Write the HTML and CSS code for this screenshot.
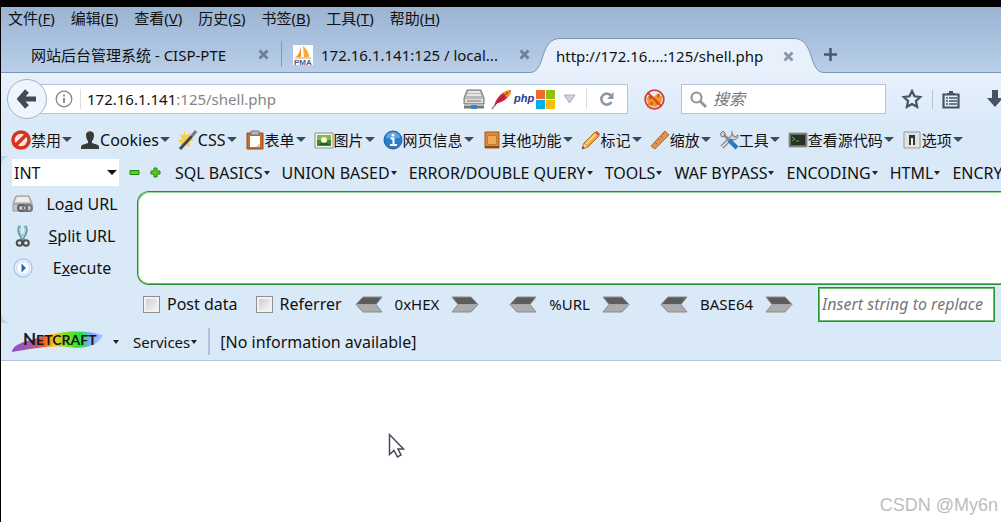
FILE: index.html
```
<!DOCTYPE html>
<html lang="zh-CN">
<head>
  <meta charset="UTF-8" />
  <meta name="viewport" content="width=device-width, initial-scale=1.0" />
  <title>http://172.16.1.141:125/shell.php</title>
  <link rel="stylesheet" href="styles.css">
</head>
<body>
  <header class="window-top">
    <nav class="menubar">
      <button>文件(<u>F</u>)</button>
      <button>编辑(<u>E</u>)</button>
      <button>查看(<u>V</u>)</button>
      <button>历史(<u>S</u>)</button>
      <button>书签(<u>B</u>)</button>
      <button>工具(<u>T</u>)</button>
      <button>帮助(<u>H</u>)</button>
    </nav>

    <div class="tabs">
      <div class="tab tab-first">
        <span class="tab-title">网站后台管理系统 - CISP-PTE</span>
        <button class="close" aria-label="Close tab"><svg width="11" height="11" viewBox="0 0 11 11"><path d="M1.500 1.500l8 8M9.500 1.500l-8 8" stroke="#6f7f95" stroke-width="2.800"/></svg></button>
      </div>
      <div class="tab tab-pma">
        <svg width="20" height="20" viewBox="0 0 20 20"><path d="M0 0h20v20H0z" fill="#fff"/><path d="M8 1v11H3c3-3 4-6 5-11z" fill="#f7931e"/><path d="M10 1c4 3 6 7 6 11h-5z" fill="#f9a93c"/><path d="M2 13h16" stroke="#c9a26b"/><text x="1" y="20" class="pma-text">PMA</text></svg>
        <span class="tab-title">172.16.1.141:125 / local...</span>
        <button class="close" aria-label="Close tab"><svg width="11" height="11" viewBox="0 0 11 11"><path d="M1.500 1.500l8 8M9.500 1.500l-8 8" stroke="#6f7f95" stroke-width="2.800"/></svg></button>
      </div>
      <div class="tab-active">
        <svg width="30" height="35" viewBox="0 0 30 35"><path d="M0 34.5C16 34.5 9 .5 30 .5V35H0z" fill="#e8f1fb"/><path d="M0 34.5C16 34.5 9 .5 30 .5" fill="none" stroke="#7d95b5"/></svg>
        <div class="tab-body">
          <span class="tab-title">http://172.16....:125/shell.php</span>
          <button class="close" aria-label="Close tab"><svg width="11" height="11" viewBox="0 0 11 11"><path d="M1.500 1.500l8 8M9.500 1.500l-8 8" stroke="#8795a8" stroke-width="2.800"/></svg></button>
        </div>
        <svg width="30" height="35" viewBox="0 0 30 35"><path d="M30 34.5C14 34.5 21 .5 0 .5V35H30z" fill="#e8f1fb"/><path d="M30 34.5C14 34.5 21 .5 0 .5" fill="none" stroke="#7d95b5"/></svg>
      </div>
      <button class="new-tab" aria-label="New tab"><svg width="13" height="13" viewBox="0 0 13 13"><path d="M6.500 0v13M0 6.500h13" stroke="#4a586b" stroke-width="2.500"/></svg></button>
    </div>
  </header>

  <div class="navbar">
    <button class="back" aria-label="Back"><svg width="18" height="20" viewBox="0 0 18 20"><path d="M9 2L2 10l7 8M3 10h15" fill="none" stroke="#414b58" stroke-width="5"/></svg></button>
    <div class="urlbar">
      <svg width="18" height="18" viewBox="0 0 18 18"><circle cx="9" cy="9" r="7.800" fill="none" stroke="#868686" stroke-width="1.300"/><path d="M9 8v5M9 4.500v2" stroke="#868686" stroke-width="1.800"/></svg>
      <a class="address" href="#"><b>172.16.1.141</b>:125/shell.php</a>
      <div class="server-icons">
        <svg width="22" height="21" viewBox="0 0 22 21"><path d="M4 1h14l3 8v6H1V9z" fill="#b9b9b9" stroke="#777"/><path d="M5 3h12M4 6h14" stroke="#e6e6e6" stroke-width="2"/><path d="M2 10h18v4H2z" fill="#dedede"/><path d="M4 12h14" stroke="#777"/><path d="M1 18h20" stroke="#777" stroke-width="3"/><path d="M8 16h6v4H8z" fill="#3a7fd6"/></svg>
        <svg width="21" height="21" viewBox="0 0 21 21"><path d="M1 20L5 15" stroke="#a87bb0" stroke-width="1.500"/><path d="M3 17C5 9 11 2 20 1c0 5-5 12-16 14z" fill="#cf2344"/><path d="M12 4c2-2 5-3 8-3 0 3-2 6-4 8z" fill="#f08a24"/><path d="M4 16L17 3" stroke="#7d1d5c"/></svg>
        <svg width="22" height="20" viewBox="0 0 22 20"><text x="1" y="13" class="php-text">php</text></svg>
        <svg width="19" height="19" viewBox="0 0 19 19"><path d="M0 0h9v9H0z" fill="#f5682c"/><path d="M10 0h9v9h-9z" fill="#8cc30b"/><path d="M0 10h9v9H0z" fill="#00adef"/><path d="M10 10h9v9h-9z" fill="#fdbb0b"/></svg>
      </div>
      <button class="drop" aria-label="Show history"><svg width="13" height="10" viewBox="0 0 13 10"><path d="M1 1h11L6.500 9z" fill="#ccd2da" stroke="#a5afbb"/></svg></button>
      <button class="reload" aria-label="Reload"><svg width="16" height="16" viewBox="0 0 16 16"><path d="M12 4.500A5.500 5.500 0 1 0 12.500 11" fill="none" stroke="#8b98a7" stroke-width="2.600"/><path d="M14.500 1v7H8z" fill="#8b98a7"/></svg></button>
    </div>
    <button class="firebug" aria-label="Blocked"><svg width="21" height="21" viewBox="0 0 21 21"><path d="M3 9l4-3 3 2 4-4 4 4-1 6-5 4-8-2z" fill="#ec9622"/><path d="M5 7l2 3M15 5l-1 3M7 16l1-3M14 15l-2-3" stroke="#b5650b" stroke-width="2"/><circle cx="10.500" cy="10.500" r="9.300" fill="none" stroke="#dc3a32" stroke-width="1.800"/><path d="M4 4l13 13" stroke="#dc3a32" stroke-width="1.800"/></svg></button>
    <label class="search">
      <svg width="17" height="17" viewBox="0 0 17 17"><circle cx="6.500" cy="6.500" r="5" fill="none" stroke="#959595" stroke-width="2.200"/><path d="M10 10l6 6" stroke="#959595" stroke-width="2.800"/></svg>
      <input type="text" placeholder="搜索" aria-label="搜索">
    </label>
    <div class="nav-actions">
      <button aria-label="Bookmark"><svg width="20" height="20" viewBox="0 0 20 20"><path d="M10 2l2.500 5.300 5.700.7-4.200 4 1.100 5.800L10 15l-5.100 2.800L6 12 1.800 8l5.700-.7z" fill="none" stroke="#465362" stroke-width="2.200"/></svg></button>
      <button class="library" aria-label="Library"><svg width="18" height="19" viewBox="0 0 18 19"><path d="M1.500 4.500h15v13h-15z" fill="none" stroke="#465362" stroke-width="2.200"/><path d="M5 5V3h2V1h4v2h2v2z" fill="#465362"/><path d="M4 8h2M7 8h8M4 11h2M7 11h8M4 14h2M7 14h8" stroke="#465362" stroke-width="1.600"/></svg></button>
      <button class="download" aria-label="Downloads"><svg width="16" height="18" viewBox="0 0 16 18"><path d="M5 0h6v8h5l-8 9-8-9h5z" fill="#465362"/></svg></button>
    </div>
  </div>

  <div class="devbar">
    <button><svg width="20" height="20" viewBox="0 0 20 20"><circle cx="10" cy="10" r="8" fill="#f5e8e4" stroke="#d5351e" stroke-width="3.600"/><path d="M4.500 15.500l11-11" stroke="#d5351e" stroke-width="3.600"/></svg>禁用<i class="arrow"></i></button>
    <button class="latin"><svg width="20" height="20" viewBox="0 0 20 20"><path d="M6 5c0-5 8-5 8 0 0 3-1 5-2 6v2l6 2c1 .5 1 2 1 4H1c0-2 0-3.500 1-4l6-2v-2C7 10 6 8 6 5z" fill="#3a3a3a"/></svg>Cookies<i class="arrow"></i></button>
    <button class="latin"><svg width="20" height="20" viewBox="0 0 20 20"><path d="M6 1l2 4 5-2-2 5 5 2-5 2 1 5-5-2-4 4V14l-3-4 4-1-2-5 4 1z" fill="#f5cf50"/><path d="M2 19L14 6" stroke="#484848" stroke-width="3"/><path d="M14 6l4-5" stroke="#777" stroke-width="3"/></svg>CSS<i class="arrow"></i></button>
    <button><svg width="20" height="20" viewBox="0 0 20 20"><path d="M2 3h16v16H2z" fill="#c56d28" stroke="#994c13"/><path d="M5 6h10v11H5z" fill="#fff"/><path d="M6 1h8v4H6z" fill="#b8b8b8" stroke="#777"/><path d="M15 13v4h-4z" fill="#bccddd"/></svg>表单<i class="arrow"></i></button>
    <button><svg width="20" height="20" viewBox="0 0 20 20"><path d="M1 3h18v15H1z" fill="#f3f3ed" stroke="#8d9187"/><path d="M3 5h14v11H3z" fill="#47843a"/><path d="M3 5h14v5H3z" fill="#85b653"/><circle cx="10" cy="10" r="3" fill="#f5f5d1"/><path d="M5 15c2-3 8-3 11 0z" fill="#235c25"/></svg>图片<i class="arrow"></i></button>
    <button><svg width="20" height="20" viewBox="0 0 20 20"><circle cx="10" cy="10" r="9" fill="#2b7cca" stroke="#1e5fa3"/><path d="M3 8a7 6 0 0 1 14 0z" fill="#62a5e3"/><path d="M7.500 8.500h3V15M7 15h7" fill="none" stroke="#fff" stroke-width="2"/><circle cx="10" cy="5" r="1.500" fill="#fff"/></svg>网页信息<i class="arrow"></i></button>
    <button><svg width="20" height="20" viewBox="0 0 20 20"><path d="M3 2h14v16H3z" fill="#dc8b35" stroke="#a75a17"/><path d="M5.500 5.500h9v9h-9z" fill="#eca75b" stroke="#c07a38"/><path d="M3 17h14" stroke="#8b4c18" stroke-width="2"/></svg>其他功能<i class="arrow"></i></button>
    <button><svg width="20" height="20" viewBox="0 0 20 20"><path d="M1 19l2-6L14 2l4 4L7 17z" fill="#f1a239" stroke="#ae6d24"/><path d="M5 14L15 4" stroke="#ffd275" stroke-width="2"/><path d="M14 2l2-1 3 3-1 2z" fill="#d84f54"/><path d="M1 19l2-5 3 3z" fill="#eedab9"/><path d="M1 19l1-3 2 2z" fill="#444"/></svg>标记<i class="arrow"></i></button>
    <button><svg width="20" height="20" viewBox="0 0 20 20"><path d="M1 16L15 1l4 4L5 19z" fill="#e2924a" stroke="#b36a2a"/><path d="M5 12l2 2M8 9l1 1M11 6l2 2M13 3l1 1" stroke="#a8642c"/></svg>缩放<i class="arrow"></i></button>
    <button><svg width="20" height="20" viewBox="0 0 20 20"><path d="M3 17L15 5" stroke="#777" stroke-width="4"/><path d="M3 17L15 5" stroke="#ddd" stroke-width="2"/><path d="M13 1v4l3 2 3-2c0 5-5 6-7 4" fill="#cfcfcf" stroke="#777"/><path d="M1 4l3-3 2 2v3l-3 1z" fill="#ccc" stroke="#777"/><path d="M5 5l5 5" stroke="#888" stroke-width="2.500"/><path d="M10 10l8 8" stroke="#2979c5" stroke-width="4.500"/></svg>工具<i class="arrow"></i></button>
    <button><svg width="20" height="20" viewBox="0 0 20 20"><path d="M1 3h18v14H1z" fill="#666" stroke="#999"/><path d="M3 5h14v10H3z" fill="#263323"/><path d="M4 7l3 2-3 2M8 11h3" fill="none" stroke="#5cb849"/></svg>查看源代码<i class="arrow"></i></button>
    <button><svg width="20" height="20" viewBox="0 0 20 20"><path d="M2 2h16v16H2z" fill="#e2e2e2" stroke="#999"/><path d="M7 5h6v10H7z" fill="#353535"/><path d="M9 8h2v7H9z" fill="#eee"/></svg>选项<i class="arrow"></i></button>
  </div>

  <div class="hackbar-wrap">
    <main class="hackbar">
      <div class="hack-menu">
        <div class="type-select">
          <select aria-label="Type"><option>INT</option></select>
        </div>
        <button class="step" aria-label="Minus"><svg width="11" height="11" viewBox="0 0 11 11"><path d="M1 3.500h9v4H1z" fill="#51d414" stroke="#26850a"/></svg></button>
        <button class="step" aria-label="Plus"><svg width="11" height="11" viewBox="0 0 11 11"><path d="M4 1h3v3h3v3H7v3H4V7H1V4h3z" fill="#51d414" stroke="#26850a"/></svg></button>
        <div class="menus">
          <button>SQL BASICS<i class="mini"></i></button>
          <button>UNION BASED<i class="mini"></i></button>
          <button>ERROR/DOUBLE QUERY<i class="mini"></i></button>
          <button>TOOLS<i class="mini"></i></button>
          <button>WAF BYPASS<i class="mini"></i></button>
          <button>ENCODING<i class="mini"></i></button>
          <button>HTML<i class="mini"></i></button>
          <button>ENCRY</button>
        </div>
      </div>

      <div class="hack-body">
        <div class="actions">
          <button><svg width="22" height="20" viewBox="0 0 22 20"><path d="M4 2h13l3 7v8H1V9z" fill="#c5c5c5" stroke="#999"/><path d="M5 3h11l2 5H3z" fill="#eee"/><path d="M2 10h17" stroke="#888"/><rect x="6" y="11" width="9" height="6" rx="3" fill="none" stroke="#5f5f5f" stroke-width="2"/><rect x="11" y="11" width="9" height="6" rx="3" fill="none" stroke="#777" stroke-width="2"/></svg><span>Lo<u>a</u>d URL</span></button>
          <button><svg width="20" height="24" viewBox="0 0 20 24"><path d="M7 2c-3 5 0 9 4 14M12 2c3 5 0 9-4 14" fill="none" stroke="#6598a7" stroke-width="3"/><path d="M7 3c-1 5 1 8 3 11M12 3c1 5-1 8-3 11" fill="none" stroke="#d9edf3"/><circle cx="6.500" cy="19" r="2.800" fill="none" stroke="#4c4c4c" stroke-width="2"/><circle cx="13" cy="19" r="2.800" fill="none" stroke="#4c4c4c" stroke-width="2"/></svg><span><u>S</u>plit URL</span></button>
          <button><svg width="20" height="20" viewBox="0 0 20 20"><circle cx="10" cy="10" r="9" fill="#edf5ff" stroke="#a9caf3" stroke-width="1.500"/><circle cx="10" cy="10" r="6.500" fill="#fff" stroke="#c9daef"/><path d="M8.500 5.500L13 10l-4.500 4.500z" fill="#2268b8"/></svg><span>E<u>x</u>ecute</span></button>
        </div>
        <div class="editor">
          <textarea aria-label="URL"></textarea>
          <div class="options">
            <label class="check"><input type="checkbox">Post data</label>
            <label class="check"><input type="checkbox">Referrer</label>
            <div class="convert">
              <button aria-label="Decode hex"><svg width="28" height="17" viewBox="0 0 28 17"><path d="M1 8.500L8 1h19l-6 7.500z" fill="#5c5c5c"/><path d="M1 8.500h20l6 7.500H8z" fill="#acacac"/><path d="M1 8.500L8 1h19l-6 7.500 6 7.500H8z" fill="none" stroke="#8b8b8b"/></svg></button>
              <span>0xHEX</span>
              <button aria-label="Encode hex"><svg width="28" height="17" viewBox="0 0 28 17"><path d="M27 8.500L20 1H1l6 7.500z" fill="#5c5c5c"/><path d="M27 8.500H7L1 16h19z" fill="#acacac"/><path d="M27 8.500L20 1H1l6 7.500L1 16h19z" fill="none" stroke="#8b8b8b"/></svg></button>
            </div>
            <div class="convert">
              <button aria-label="Decode URL"><svg width="28" height="17" viewBox="0 0 28 17"><path d="M1 8.500L8 1h19l-6 7.500z" fill="#5c5c5c"/><path d="M1 8.500h20l6 7.500H8z" fill="#acacac"/><path d="M1 8.500L8 1h19l-6 7.500 6 7.500H8z" fill="none" stroke="#8b8b8b"/></svg></button>
              <span>%URL</span>
              <button aria-label="Encode URL"><svg width="28" height="17" viewBox="0 0 28 17"><path d="M27 8.500L20 1H1l6 7.500z" fill="#5c5c5c"/><path d="M27 8.500H7L1 16h19z" fill="#acacac"/><path d="M27 8.500L20 1H1l6 7.500L1 16h19z" fill="none" stroke="#8b8b8b"/></svg></button>
            </div>
            <div class="convert">
              <button aria-label="Decode base64"><svg width="28" height="17" viewBox="0 0 28 17"><path d="M1 8.500L8 1h19l-6 7.500z" fill="#5c5c5c"/><path d="M1 8.500h20l6 7.500H8z" fill="#acacac"/><path d="M1 8.500L8 1h19l-6 7.500 6 7.500H8z" fill="none" stroke="#8b8b8b"/></svg></button>
              <span>BASE64</span>
              <button aria-label="Encode base64"><svg width="28" height="17" viewBox="0 0 28 17"><path d="M27 8.500L20 1H1l6 7.500z" fill="#5c5c5c"/><path d="M27 8.500H7L1 16h19z" fill="#acacac"/><path d="M27 8.500L20 1H1l6 7.500L1 16h19z" fill="none" stroke="#8b8b8b"/></svg></button>
            </div>
            <input class="replace" type="text" placeholder="Insert string to replace" aria-label="Insert string to replace">
          </div>
        </div>
      </div>
    </main>
  </div>

  <div class="netcraft">
    <button class="logo" aria-label="Netcraft">
      <svg width="92" height="24" viewBox="0 0 92 24">
        <defs><linearGradient id="rainbow"><stop offset="0" stop-color="#8b52c5"/><stop offset=".2" stop-color="#a85aa8"/><stop offset=".34" stop-color="#f0522a"/><stop offset=".46" stop-color="#fdc321"/><stop offset=".6" stop-color="#7ae01f"/><stop offset=".75" stop-color="#1fe63c"/><stop offset=".86" stop-color="#7cabff"/><stop offset="1" stop-color="#a8c6fb"/></linearGradient></defs>
        <path d="M0 22C1 14 14 11 26 8 44 1 72-1 91 5c-4 9-14 13-28 13C38 14 20 19 0 22z" fill="url(#rainbow)"/>
        <text x="11" y="15" class="logo-text"><tspan class="logo-big">N</tspan>ETCRAFT</text>
      </svg>
      <i class="mini"></i>
    </button>
    <button class="services">Services<i class="mini"></i></button>
    <span class="info">[No information available]</span>
  </div>

  <section class="page">
    <svg class="cursor" width="18" height="26" viewBox="0 0 18 26"><path d="M1.500 1.500v20l4.500-4 3.500 6.500 3.500-2-3-6h5.500z" fill="#fff" stroke="#454b5c" stroke-width="1.500"/></svg>
    <span class="watermark">CSDN @My6n</span>
  </section>
</body>
</html>
```
FILE: styles.css
```
* {
  box-sizing: border-box;
}
body {
  margin: 0;
  min-height: 100vh;
  display: flex;
  flex-direction: column;
  overflow: hidden;
  border-left: 1px solid #000;
  font: 16px/20px "Noto Sans", "Noto Sans CJK SC", sans-serif;
  color: #111;
  background: #fff;
  white-space: nowrap;
}
button, input, select, textarea {
  font: inherit;
  color: inherit;
}
button {
  display: flex;
  align-items: center;
  flex-shrink: 0;
  padding: 0;
  border: none;
  background: none;
}
svg {
  display: block;
  flex-shrink: 0;
  overflow: visible;
}

/* Menu and tabs */
.window-top {
  border-top: 7px solid #000;
  background: linear-gradient(#9bb4d2, #b9cfea);
}
.menubar {
  display: flex;
  gap: 16px;
  padding: 1px 7px 3px;
  font-size: 15px;
}
.tabs {
  display: flex;
  align-items: flex-end;
  height: 42px;
  border-bottom: 1px solid #7d95b5;
}
.tab {
  display: flex;
  align-items: center;
  gap: 8px;
  height: 35px;
}
.tab-title {
  font-size: 15px;
}
.tab-first {
  width: 280px;
  padding: 0 12px 0 30px;
}
.tab-pma {
  width: 249px;
  padding-left: 12px;
  position: relative;
}
.tab-pma::before {
  content: "";
  position: absolute;
  left: 0;
  top: 4px;
  height: 26px;
  border-left: 1px solid #839bbb;
}
.close {
  margin-left: auto;
}
.tab-active {
  display: flex;
  margin-bottom: -1px;
}
.tab-body {
  display: flex;
  align-items: center;
  width: 234px;
  border-top: 1px solid #7d95b5;
  background: #e8f1fb;
}
.tab-body .tab-title {
  margin-left: -4px;
}
.new-tab {
  height: 35px;
}
.pma-text {
  font: bold 8px "Liberation Sans", sans-serif;
  fill: #55558b;
}

/* Navigation */
.navbar {
  display: flex;
  align-items: center;
  height: 52px;
  padding-left: 6px;
  background: linear-gradient(#e8f1fb, #dae9f8);
}
.back {
  width: 40px;
  height: 40px;
  justify-content: center;
  border: 1px solid #9fb2cc;
  border-radius: 50%;
  background: #eef5fc;
  z-index: 1;
}
.urlbar {
  display: flex;
  align-items: center;
  flex: 1 1 auto;
  height: 30px;
  margin-left: -8px;
  padding-left: 15px;
  border: 1px solid #b3c3d9;
  background: #fff;
}
.address {
  margin-left: 7px;
  padding-left: 6px;
  border-left: 1px solid #ddd;
  font-size: 15px;
  color: #858585;
  text-decoration: none;
}
.address b {
  font-weight: normal;
  color: #111;
}
.server-icons {
  display: flex;
  align-items: center;
  gap: 6px;
  margin-left: auto;
}
.server-icons svg:nth-child(n+3) {
  margin-left: -5px;
}
.php-text {
  font: italic bold 11px "Liberation Sans", sans-serif;
  fill: #273a88;
}
.drop {
  margin: 0 10px 0 8px;
}
.reload {
  height: 20px;
  padding: 0 12px;
  border-left: 1px solid #ddd;
}
.firebug {
  margin: 0 16px;
}
.search {
  display: flex;
  align-items: center;
  gap: 6px;
  width: 205px;
  height: 30px;
  padding: 0 8px;
  border: 1px solid #b3c3d9;
  background: #fff;
}
.search input {
  width: 100%;
  min-width: 0;
  padding: 0;
  border: none;
  font-style: italic;
}
input::placeholder {
  color: #777;
  opacity: 1;
}
.nav-actions {
  display: flex;
  align-items: center;
  width: 115px;
  padding-left: 16px;
  overflow: hidden;
}
.library {
  margin-left: 10px;
  padding-left: 9px;
  border-left: 1px solid #b7c2d0;
}
.download {
  margin-left: 27px;
}

/* Developer toolbar */
.devbar {
  display: flex;
  gap: 8px;
  height: 31px;
  padding: 0 0 2px 10px;
  overflow: hidden;
  font-size: 15px;
  background: #dae9f8;
}
.latin {
  font-size: 16px;
}
.arrow {
  margin-left: 1px;
  border: 5px solid transparent;
  border-top-color: #3c4b5c;
  border-bottom: none;
}
.mini {
  margin-left: 1px;
  border: 3px solid transparent;
  border-top: 4px solid #222;
  border-bottom: none;
}

/* Hackbar */
.hackbar-wrap {
  background: #bdd1ec;
}
.hackbar {
  border-radius: 10px 0 0 10px;
  background: #dae9f8;
}
.hack-menu {
  display: flex;
  align-items: center;
  height: 35px;
  padding: 0 0 2px 11px;
  overflow: hidden;
}
.type-select {
  position: relative;
  width: 107px;
  flex-shrink: 0;
  margin-right: 10px;
}
.type-select select {
  display: block;
  width: 100%;
  height: 27px;
  padding: 0 2px;
  border: none;
  border-radius: 0;
  appearance: none;
  background: #fff;
}
.type-select::after {
  content: "";
  position: absolute;
  right: 2px;
  top: 11px;
  border: 5px solid transparent;
  border-top-color: #111;
  border-bottom: none;
}
.step {
  margin-right: 10px;
}
.menus {
  display: flex;
  gap: 12px;
  margin-left: 4px;
}
.hack-body {
  display: flex;
}
.actions {
  width: 136px;
  flex-shrink: 0;
  padding-left: 11px;
}
.actions button {
  width: 106px;
  height: 32px;
  padding-bottom: 6px;
}
.actions span {
  flex: 1;
  text-align: center;
}
.actions svg {
  width: 22px;
  margin-right: 12px;
}
.editor {
  flex: 1;
  min-width: 0;
}
.editor textarea {
  display: block;
  width: 100%;
  height: 94px;
  resize: none;
  border: 1px solid #2a922c;
  border-right: none;
  border-radius: 12px 0 0 12px;
  box-shadow: inset 1px 1px #9fd49f, inset 0 -1px #6fbc70;
  background: #fff;
}
.options {
  display: flex;
  align-items: center;
  height: 38px;
  padding: 0 6px;
}
.check {
  display: flex;
  align-items: center;
  margin-right: 18px;
}
.check input {
  appearance: none;
  width: 17px;
  height: 17px;
  margin: 0 7px 0 0;
  border: 1px solid #8d8f92;
  background: linear-gradient(135deg, #c5cad2, #fafafa);
  box-shadow: inset 0 0 0 2px #f2f2f2;
}
.convert {
  display: flex;
  align-items: center;
  gap: 12px;
  margin: 0 30px 0 -5px;
  font-size: 15px;
}
.convert + .convert {
  margin-left: 0;
}
.replace {
  flex: 1;
  min-width: 0;
  height: 35px;
  margin-left: -5px;
  padding: 0 3px;
  border: 1px solid #2a922c;
  box-shadow: inset 0 0 0 1px #6fbc70;
  font-style: italic;
  background: #fff;
}

/* Netcraft */
.netcraft {
  display: flex;
  align-items: center;
  height: 38px;
  padding-left: 11px;
  border-bottom: 1px solid #b2c3da;
  background: #dae9f8;
}
.logo {
  gap: 8px;
}
.logo-text {
  font: bold 14px Lato, sans-serif;
  fill: #171717;
}
.logo-big {
  font-size: 17px;
}
.services {
  height: 27px;
  margin-left: 14px;
  padding-right: 11px;
  border-right: 2px solid #b5bddd;
  font-size: 15px;
}
.info {
  margin-left: 10px;
}

/* Page area */
.page {
  position: relative;
  flex: 1;
  background: #fff;
}
.cursor {
  position: absolute;
  left: 387px;
  top: 72px;
}
.watermark {
  position: absolute;
  right: 3px;
  bottom: 7px;
  font: 18px/20px "Liberation Sans", sans-serif;
  color: #bdbdbd;
}
```
